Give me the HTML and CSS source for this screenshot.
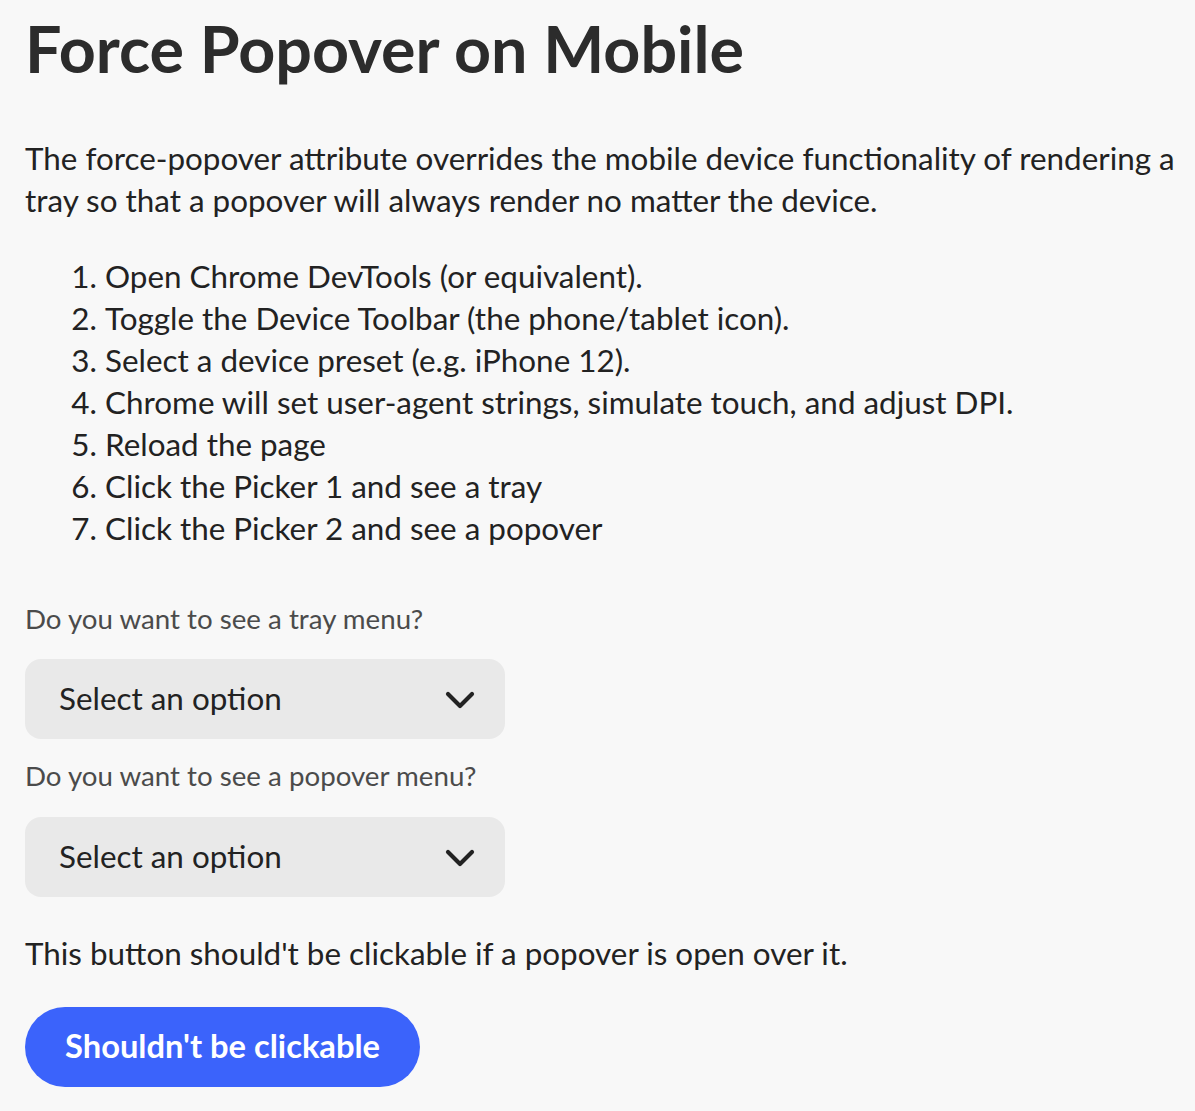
FILE: index.html
```html
<!DOCTYPE html>
<html lang="en">
<head>
<meta charset="utf-8">
<title>Force Popover on Mobile</title>
<link rel="stylesheet" href="styles.css">
</head>
<body>
<main class="page">
  <h1 class="title">Force Popover on Mobile</h1>
  <p class="lead">The force-popover attribute overrides the mobile device functionality of rendering a tray so that a popover will always render no matter the device.</p>
  <ol class="steps">
    <li>Open Chrome DevTools (or equivalent).</li>
    <li>Toggle the Device Toolbar (the phone/tablet icon).</li>
    <li>Select a device preset (e.g. iPhone 12).</li>
    <li>Chrome will set user-agent strings, simulate touch, and adjust DPI.</li>
    <li>Reload the page</li>
    <li>Click the Picker 1 and see a tray</li>
    <li>Click the Picker 2 and see a popover</li>
  </ol>
  <div class="field">
    <label class="field-label">Do you want to see a tray menu?</label>
    <button class="picker" type="button">
      <span class="picker-text">Select an option</span>
      <svg class="chevron" width="30" height="18" viewBox="0 0 30 18"><path d="M3 3 L15 15 L27 3" fill="none" stroke="#222" stroke-width="4.2" stroke-linecap="round" stroke-linejoin="round"/></svg>
    </button>
  </div>
  <div class="field">
    <label class="field-label">Do you want to see a popover menu?</label>
    <button class="picker" type="button">
      <span class="picker-text">Select an option</span>
      <svg class="chevron" width="30" height="18" viewBox="0 0 30 18"><path d="M3 3 L15 15 L27 3" fill="none" stroke="#222" stroke-width="4.2" stroke-linecap="round" stroke-linejoin="round"/></svg>
    </button>
  </div>
  <p class="note">This button should't be clickable if a popover is open over it.</p>
  <button class="cta" type="button">Shouldn't be clickable</button>
</main>
</body>
</html>
```
FILE: styles.css
```css
html, body {
  margin: 0;
  background: #f8f8f8;
}
body {
  font-family: "Lato", "Noto Sans", sans-serif;
  color: #222222;
}
.page {
  padding: 0 8px 0 25px;
  display: flex;
  flex-direction: column;
  align-items: flex-start;
}
.title {
  margin: 8px 0 0 0;
  font-size: 64.6px;
  line-height: 80px;
  font-weight: 700;
  color: #2c2c2c;
}
.lead {
  margin: 49px 0 0 0;
  font-size: 31.4px;
  line-height: 42px;
}
.steps {
  margin: 34px 0 0 0;
  padding-left: 80px;
  font-size: 31.4px;
  line-height: 42px;
}
.field {
  display: flex;
  flex-direction: column;
  align-items: flex-start;
}
.field-label {
  font-size: 27.7px;
  line-height: 36px;
  color: #4b4b4b;
  margin-top: 52px;
}
.field + .field .field-label {
  margin-top: 19px;
}
.picker {
  margin-top: 22px;
  width: 480px;
  height: 80px;
  border: none;
  border-radius: 16px;
  background: #e9e9e9;
  display: flex;
  align-items: center;
  justify-content: space-between;
  padding: 2px 30px 0 34px;
  font-family: inherit;
  font-size: 31.4px;
  color: #222222;
}
.picker-text {
  line-height: 40px;
  margin-top: -4px;
}
.field + .field .picker {
  margin-top: 23px;
}
.chevron {
  display: block;
}
.note {
  margin: 35px 0 0 0;
  font-size: 31.4px;
  line-height: 42px;
}
.cta {
  margin-top: 33px;
  height: 80px;
  padding: 0 40px 4px 40px;
  border: none;
  border-radius: 40px;
  background: #3b63fb;
  color: #ffffff;
  font-family: inherit;
  font-size: 32.7px;
  font-weight: 700;
}
```
